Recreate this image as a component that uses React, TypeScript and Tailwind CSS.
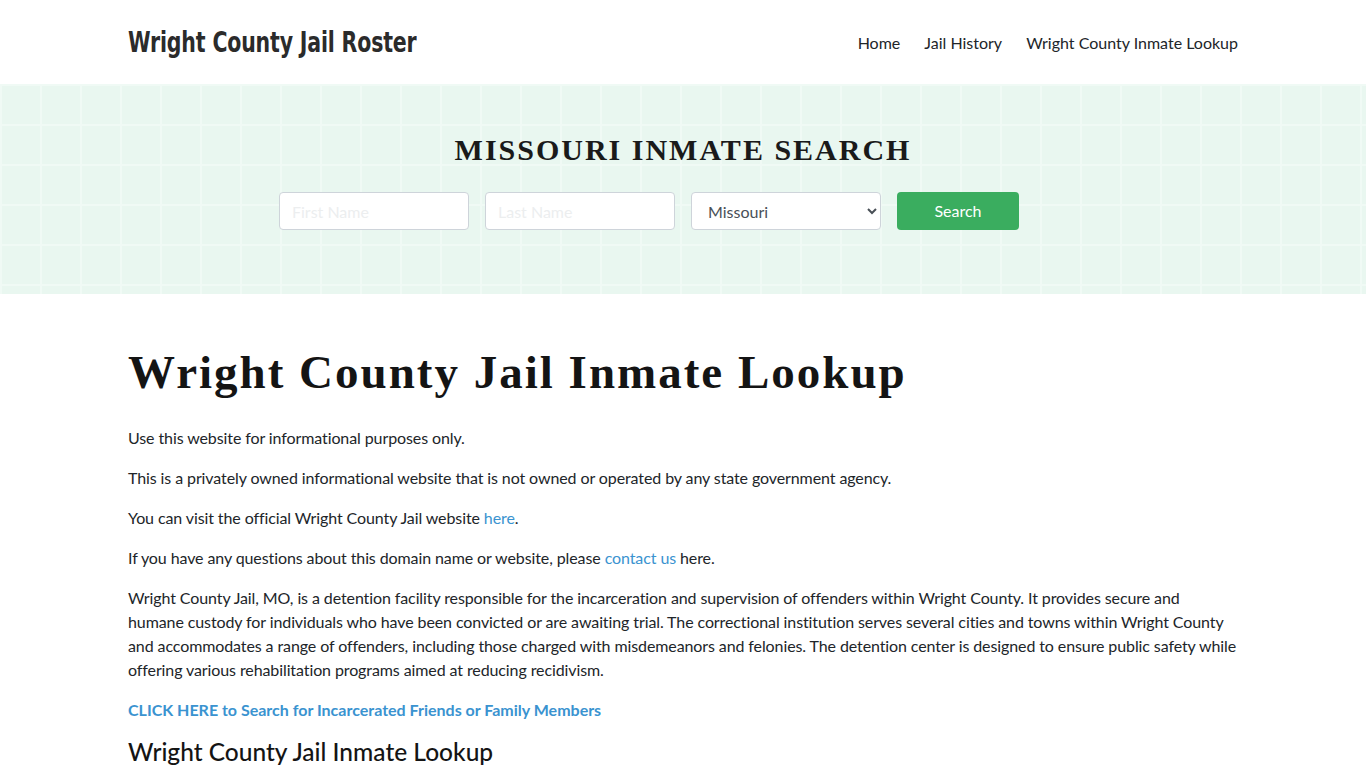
import React from 'react';

const navLinks = ['Home', 'Jail History', 'Wright County Inmate Lookup'];

const Header: React.FC = () => {
    return (
        <header className="h-[84px] bg-white">
            <div className="mx-auto flex h-full w-[1110px] items-center justify-between">
                <a className="origin-left scale-x-[0.785] pt-[2px] font-['DejaVu_Sans_Condensed','DejaVu_Sans',sans-serif] text-[29px] font-bold tracking-[-0.2px] text-[#2b2b2b]">
                    Wright County Jail Roster
                </a>
                <nav className="flex gap-6 pt-[2px] text-base text-[#212529]">
                    {navLinks.map((link) => (
                        <a key={link} className="cursor-pointer">{link}</a>
                    ))}
                </nav>
            </div>
        </header>
    );
};

const SearchHero: React.FC = () => {
    return (
        <section className="h-[210px] bg-[#e9f7f0] bg-[linear-gradient(to_right,#f0faf5_2px,transparent_2px),linear-gradient(to_bottom,#f0faf5_2px,transparent_2px)] bg-[size:40px_40px]">
            <div className="mx-auto w-[1110px] pt-[48px]">
                <h2 className="text-center font-['Liberation_Serif',serif] text-[30px] font-bold leading-9 tracking-[2px] text-[#1a1a1a]">
                    MISSOURI INMATE SEARCH
                </h2>
                <form className="mt-[24px] flex gap-4 pl-[151px]">
                    <input
                        type="text"
                        placeholder="First Name"
                        className="h-[38px] w-[190px] rounded border border-[#ced4da] bg-white px-3 text-base placeholder:text-[#eceeef]"
                    />
                    <input
                        type="text"
                        placeholder="Last Name"
                        className="h-[38px] w-[190px] rounded border border-[#ced4da] bg-white px-3 text-base placeholder:text-[#eceeef]"
                    />
                    <select
                        defaultValue="Missouri"
                        className="h-[38px] w-[190px] rounded border border-[#ced4da] bg-white px-3 text-base text-[#495057]"
                    >
                        <option>Missouri</option>
                    </select>
                    <button type="button" className="h-[38px] w-[122px] rounded bg-[#3aad5f] text-base text-white">
                        Search
                    </button>
                </form>
            </div>
        </section>
    );
};

const App: React.FC = () => {
    return (
        <div className="min-h-screen bg-white font-['Lato','Liberation_Sans',sans-serif] text-[#212529]">
            <Header />
            <SearchHero />
            <main className="mx-auto w-[1110px] pt-[50px]">
                <h1 className="font-['Liberation_Serif',serif] text-[47px] font-bold leading-[56px] tracking-[2px] text-[#141414]">
                    Wright County Jail Inmate Lookup
                </h1>
                <div className="mt-[26px] text-base leading-6 tracking-[-0.1px]">
                    <p className="mb-4">Use this website for informational purposes only.</p>
                    <p className="mb-4">This is a privately owned informational website that is not owned or operated by any state government agency.</p>
                    <p className="mb-4">
                        You can visit the official Wright County Jail website <a className="text-[#3a93d0]">here</a>.
                    </p>
                    <p className="mb-4">
                        If you have any questions about this domain name or website, please <a className="text-[#3a93d0]">contact us</a> here.
                    </p>
                    <p className="mb-4">
                        Wright County Jail, MO, is a detention facility responsible for the incarceration and supervision of offenders within Wright County. It provides secure and humane custody for individuals who have been convicted or are awaiting trial. The correctional institution serves several cities and towns within Wright County and accommodates a range of offenders, including those charged with misdemeanors and felonies. The detention center is designed to ensure public safety while offering various rehabilitation programs aimed at reducing recidivism.
                    </p>
                    <p className="mb-[14px]">
                        <a className="font-bold tracking-normal text-[#3a93d0]">CLICK HERE to Search for Incarcerated Friends or Family Members</a>
                    </p>
                    <h2 className="text-[24.5px] font-medium leading-8 tracking-normal text-[#141414]">Wright County Jail Inmate Lookup</h2>
                </div>
            </main>
        </div>
    );
};

export default App;
